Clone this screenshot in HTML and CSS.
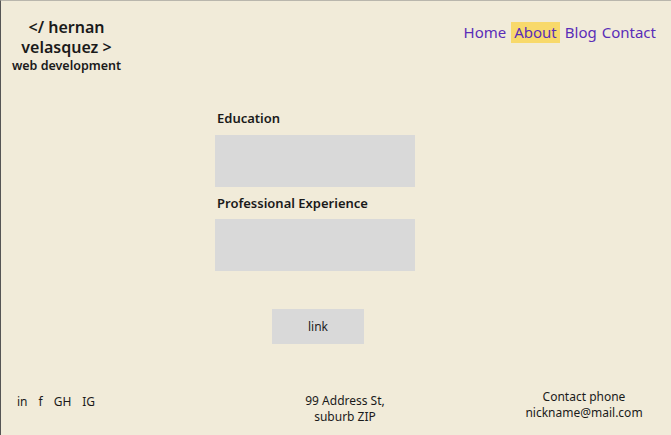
FILE: index.html
```html
<!DOCTYPE html>
<html lang="en">
<head>
<meta charset="utf-8">
<title>hernan velasquez</title>
<link rel="stylesheet" href="styles.css">
</head>
<body>
<div class="page">
  <header class="header">
    <div class="logo">
      <div class="logo-name">&lt;/ hernan<br>velasquez &gt;</div>
      <div class="logo-sub">web development</div>
    </div>
    <nav class="nav">
      <a class="nav-link" href="#">Home</a>
      <a class="nav-link active" href="#">About</a>
      <a class="nav-link" href="#">Blog</a>
      <a class="nav-link" href="#">Contact</a>
    </nav>
  </header>
  <main class="main">
    <section class="column">
      <h2 class="label first">Education</h2>
      <div class="box"></div>
      <h2 class="label">Professional Experience</h2>
      <div class="box"></div>
      <div class="btn-row"><a class="btn" href="#">link</a></div>
    </section>
  </main>
  <footer class="footer">
    <div class="social"><span>in</span><span>f</span><span>GH</span><span>IG</span></div>
    <div class="address">99 Address St,<br>suburb ZIP</div>
    <div class="spacer"></div>
    <div class="contact">Contact phone<br>nickname@mail.com</div>
  </footer>
</div>
</body>
</html>
```
FILE: styles.css
```css
html, body { margin: 0; padding: 0; }
body {
  background: #f1ebd9;
  font-family: "Noto Sans", "DejaVu Sans", sans-serif;
  color: #1a1a1a;
}
.page {
  width: 671px;
  height: 435px;
  box-sizing: border-box;
  border-left: 1px solid #555;
  border-top: 1px solid #b9b6ad;
  display: flex;
  flex-direction: column;
}
.header {
  display: flex;
  justify-content: space-between;
  align-items: flex-start;
  padding: 16px 15px 0 0;
}
.logo {
  width: 131px;
  text-align: center;
  font-weight: 600;
}
.logo-name { font-size: 16px; line-height: 20px; }
.logo-sub { font-size: 12.5px; line-height: 18px; }
.nav {
  display: flex;
  gap: 5px;
  padding-top: 5px;
}
.nav-link {
  font-size: 15px;
  line-height: 21px;
  color: #5a2db8;
  text-decoration: none;
}
.nav-link.active { background: #f8d96b; padding: 0 3px; }
.main {
  flex: 1;
  padding-left: 214px;
  padding-top: 33px;
}
.column { width: 200px; }
.label {
  margin: 0 0 6px 2px;
  font-size: 13px;
  line-height: 20px;
  font-weight: 600;
}
.label.first { margin-bottom: 7px; }
.box {
  height: 52px;
  background: #d9d9d9;
  margin-bottom: 6px;
}
.btn-row { display: flex; justify-content: center; padding: 32px 0 0 6px; }
.btn {
  width: 92px;
  height: 35px;
  display: flex;
  align-items: center;
  justify-content: center;
  background: #d9d9d9;
  color: #222;
  font-size: 12px;
  text-decoration: none;
}
.footer {
  display: grid;
  grid-template-columns: 258px 140px 1fr 130px;
  align-items: start;
  padding: 0 22px 10px 16px;
  font-size: 12px;
  line-height: 16px;
}
.social { display: flex; gap: 11px; padding-top: 2px; }
.address { text-align: center; padding-top: 1px; }
.contact { text-align: center; margin-top: -3px; }
```
